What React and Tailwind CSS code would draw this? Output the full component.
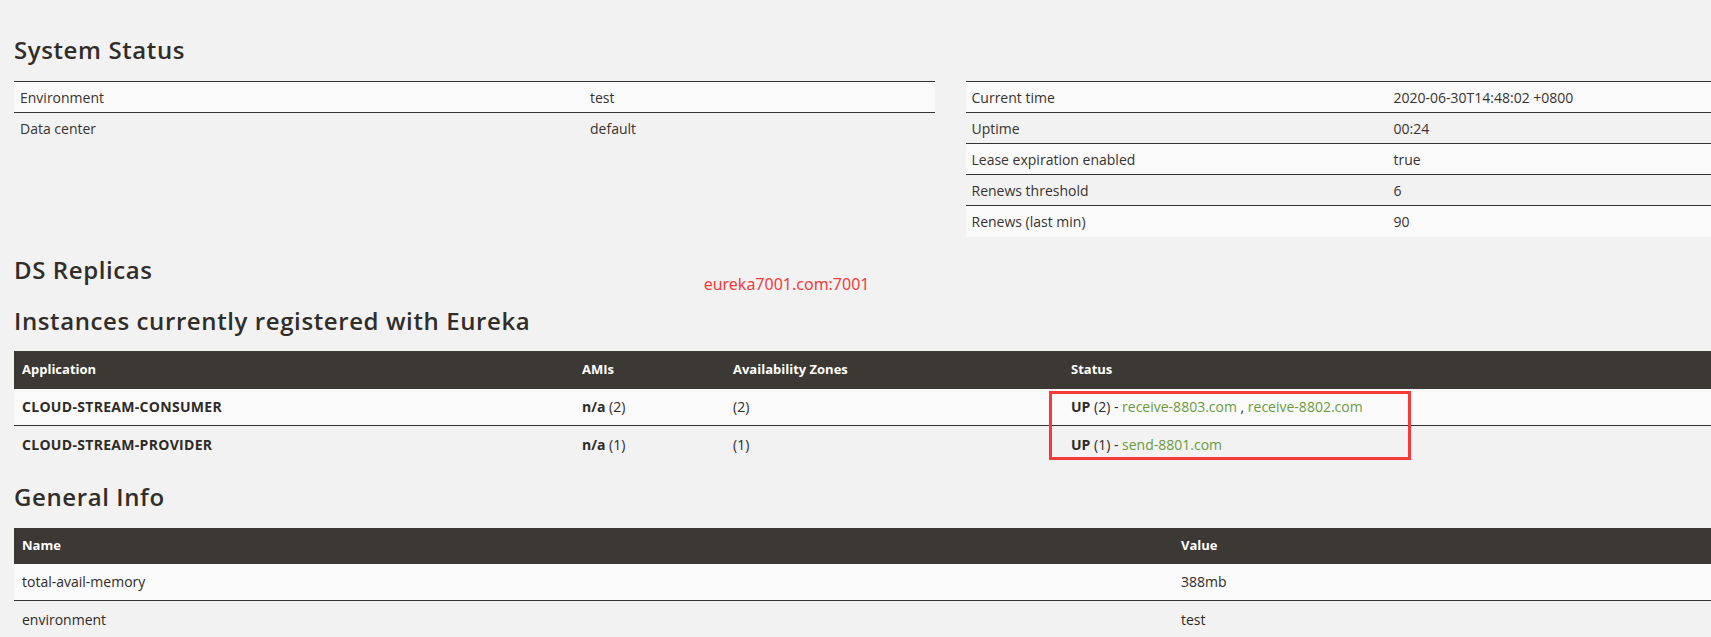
const systemLeft = [
  ['Environment', 'test'],
  ['Data center', 'default'],
];

const systemRight = [
  ['Current time', '2020-06-30T14:48:02 +0800'],
  ['Uptime', '00:24'],
  ['Lease expiration enabled', 'true'],
  ['Renews threshold', '6'],
  ['Renews (last min)', '90'],
];

const instances = [
  { app: 'CLOUD-STREAM-CONSUMER', count: 2, hosts: ['receive-8803.com', 'receive-8802.com'] },
  { app: 'CLOUD-STREAM-PROVIDER', count: 1, hosts: ['send-8801.com'] },
];

const generalInfo = [
  ['total-avail-memory', '388mb'],
  ['environment', 'test'],
];

const body = "font-['Open_Sans',sans-serif]";
const heading = "font-['Open_Sans',sans-serif] text-[24px] font-semibold leading-[30px] text-[#312d29] tracking-[0.6px]";

function KeyValueTable({ rows, keyWidth }) {
  return (
    <table className="w-full border-collapse border-t border-[#333]">
      <tbody>
        {rows.map(([k, v], i) => (
          <tr key={k} className={`${i % 2 === 0 ? 'bg-[#fafafa]' : ''} ${i < rows.length - 1 ? 'border-b border-[#333]' : ''}`}>
            <td className={`h-[31px] pl-[6px] text-[14px] text-[#38332f] ${keyWidth}`}>{k}</td>
            <td className="h-[31px] text-[14px] text-[#38332f]">{v}</td>
          </tr>
        ))}
      </tbody>
    </table>
  );
}

export default function App() {
  return (
    <div className={`min-h-[637px] w-full overflow-hidden bg-[#f2f2f2] ${body}`}>
      <div className="w-[1900px] pl-[14px] pr-[15px] pt-[35px]">
        {/* System status */}
        <h2 className={heading}>System Status</h2>
        <div className="mt-[16px] flex gap-[31px]">
          <div className="w-[921px]">
            <KeyValueTable rows={systemLeft} keyWidth="w-[576px]" />
          </div>
          <div className="w-[920px]">
            <KeyValueTable rows={systemRight} keyWidth="w-[428px]" />
          </div>
        </div>

        {/* DS replicas */}
        <div className="mt-[18px] flex">
          <h2 className={heading}>DS Replicas</h2>
          <span className="ml-[551px] mt-[17px] text-[16px] leading-[24px] text-[#f23c3c] font-['Noto_Sans',sans-serif]">
            eureka7001.com:7001
          </span>
        </div>

        {/* Instances */}
        <h2 className={`${heading} mt-[10px]`}>Instances currently registered with Eureka</h2>
        <table className="mt-[15px] w-full border-collapse text-[14px]">
          <thead>
            <tr className="bg-[#3c3834] text-left text-[13px] text-white">
              <th className="h-[38px] w-[560px] pl-[8px] font-bold">Application</th>
              <th className="w-[151px] pl-[8px] font-bold">AMIs</th>
              <th className="w-[338px] pl-[8px] font-bold">Availability Zones</th>
              <th className="pl-[8px] font-bold">Status</th>
            </tr>
          </thead>
          <tbody>
            {instances.map((row, i) => (
              <tr key={row.app} className={i === 0 ? 'border-b border-[#333] bg-[#fafafa]' : ''}>
                <td className="h-[37px] pl-[8px] font-bold tracking-[0.3px] text-[#2f2b27]">{row.app}</td>
                <td className="pl-[8px] text-[#2f2b27]">
                  <b className="font-bold">n/a</b> ({row.count})
                </td>
                <td className="pl-[8px] text-[#2f2b27]">({row.count})</td>
                <td className="pl-[8px] text-[#2f2b27]">
                  <div className="relative">
                    <b className="font-bold">UP</b> ({row.count}) -{' '}
                    {row.hosts.map((h, j) => (
                      <span key={h}>
                        {j > 0 && ' , '}
                        <a className="text-[#6b9a3a]">{h}</a>
                      </span>
                    ))}
                    {i === 0 && (
                      <span className="pointer-events-none absolute left-[-22px] top-[-5px] h-[69px] w-[362px] border-[3px] border-[#f53a3a]" />
                    )}
                  </div>
                </td>
              </tr>
            ))}
          </tbody>
        </table>

        {/* General info */}
        <h2 className={`${heading} mt-[19px]`}>General Info</h2>
        <table className="mt-[16px] w-full border-collapse text-[14px]">
          <thead>
            <tr className="bg-[#3c3834] text-left text-[13px] text-white">
              <th className="h-[36px] w-[1159px] pl-[8px] font-bold">Name</th>
              <th className="pl-[8px] font-bold">Value</th>
            </tr>
          </thead>
          <tbody>
            {generalInfo.map(([k, v], i) => (
              <tr key={k} className={i === 0 ? 'border-b border-[#333] bg-[#fafafa]' : ''}>
                <td className="h-[37px] pl-[8px] text-[#2f2b27]">{k}</td>
                <td className="pl-[8px] text-[#2f2b27]">{v}</td>
              </tr>
            ))}
          </tbody>
        </table>
      </div>
    </div>
  );
}
